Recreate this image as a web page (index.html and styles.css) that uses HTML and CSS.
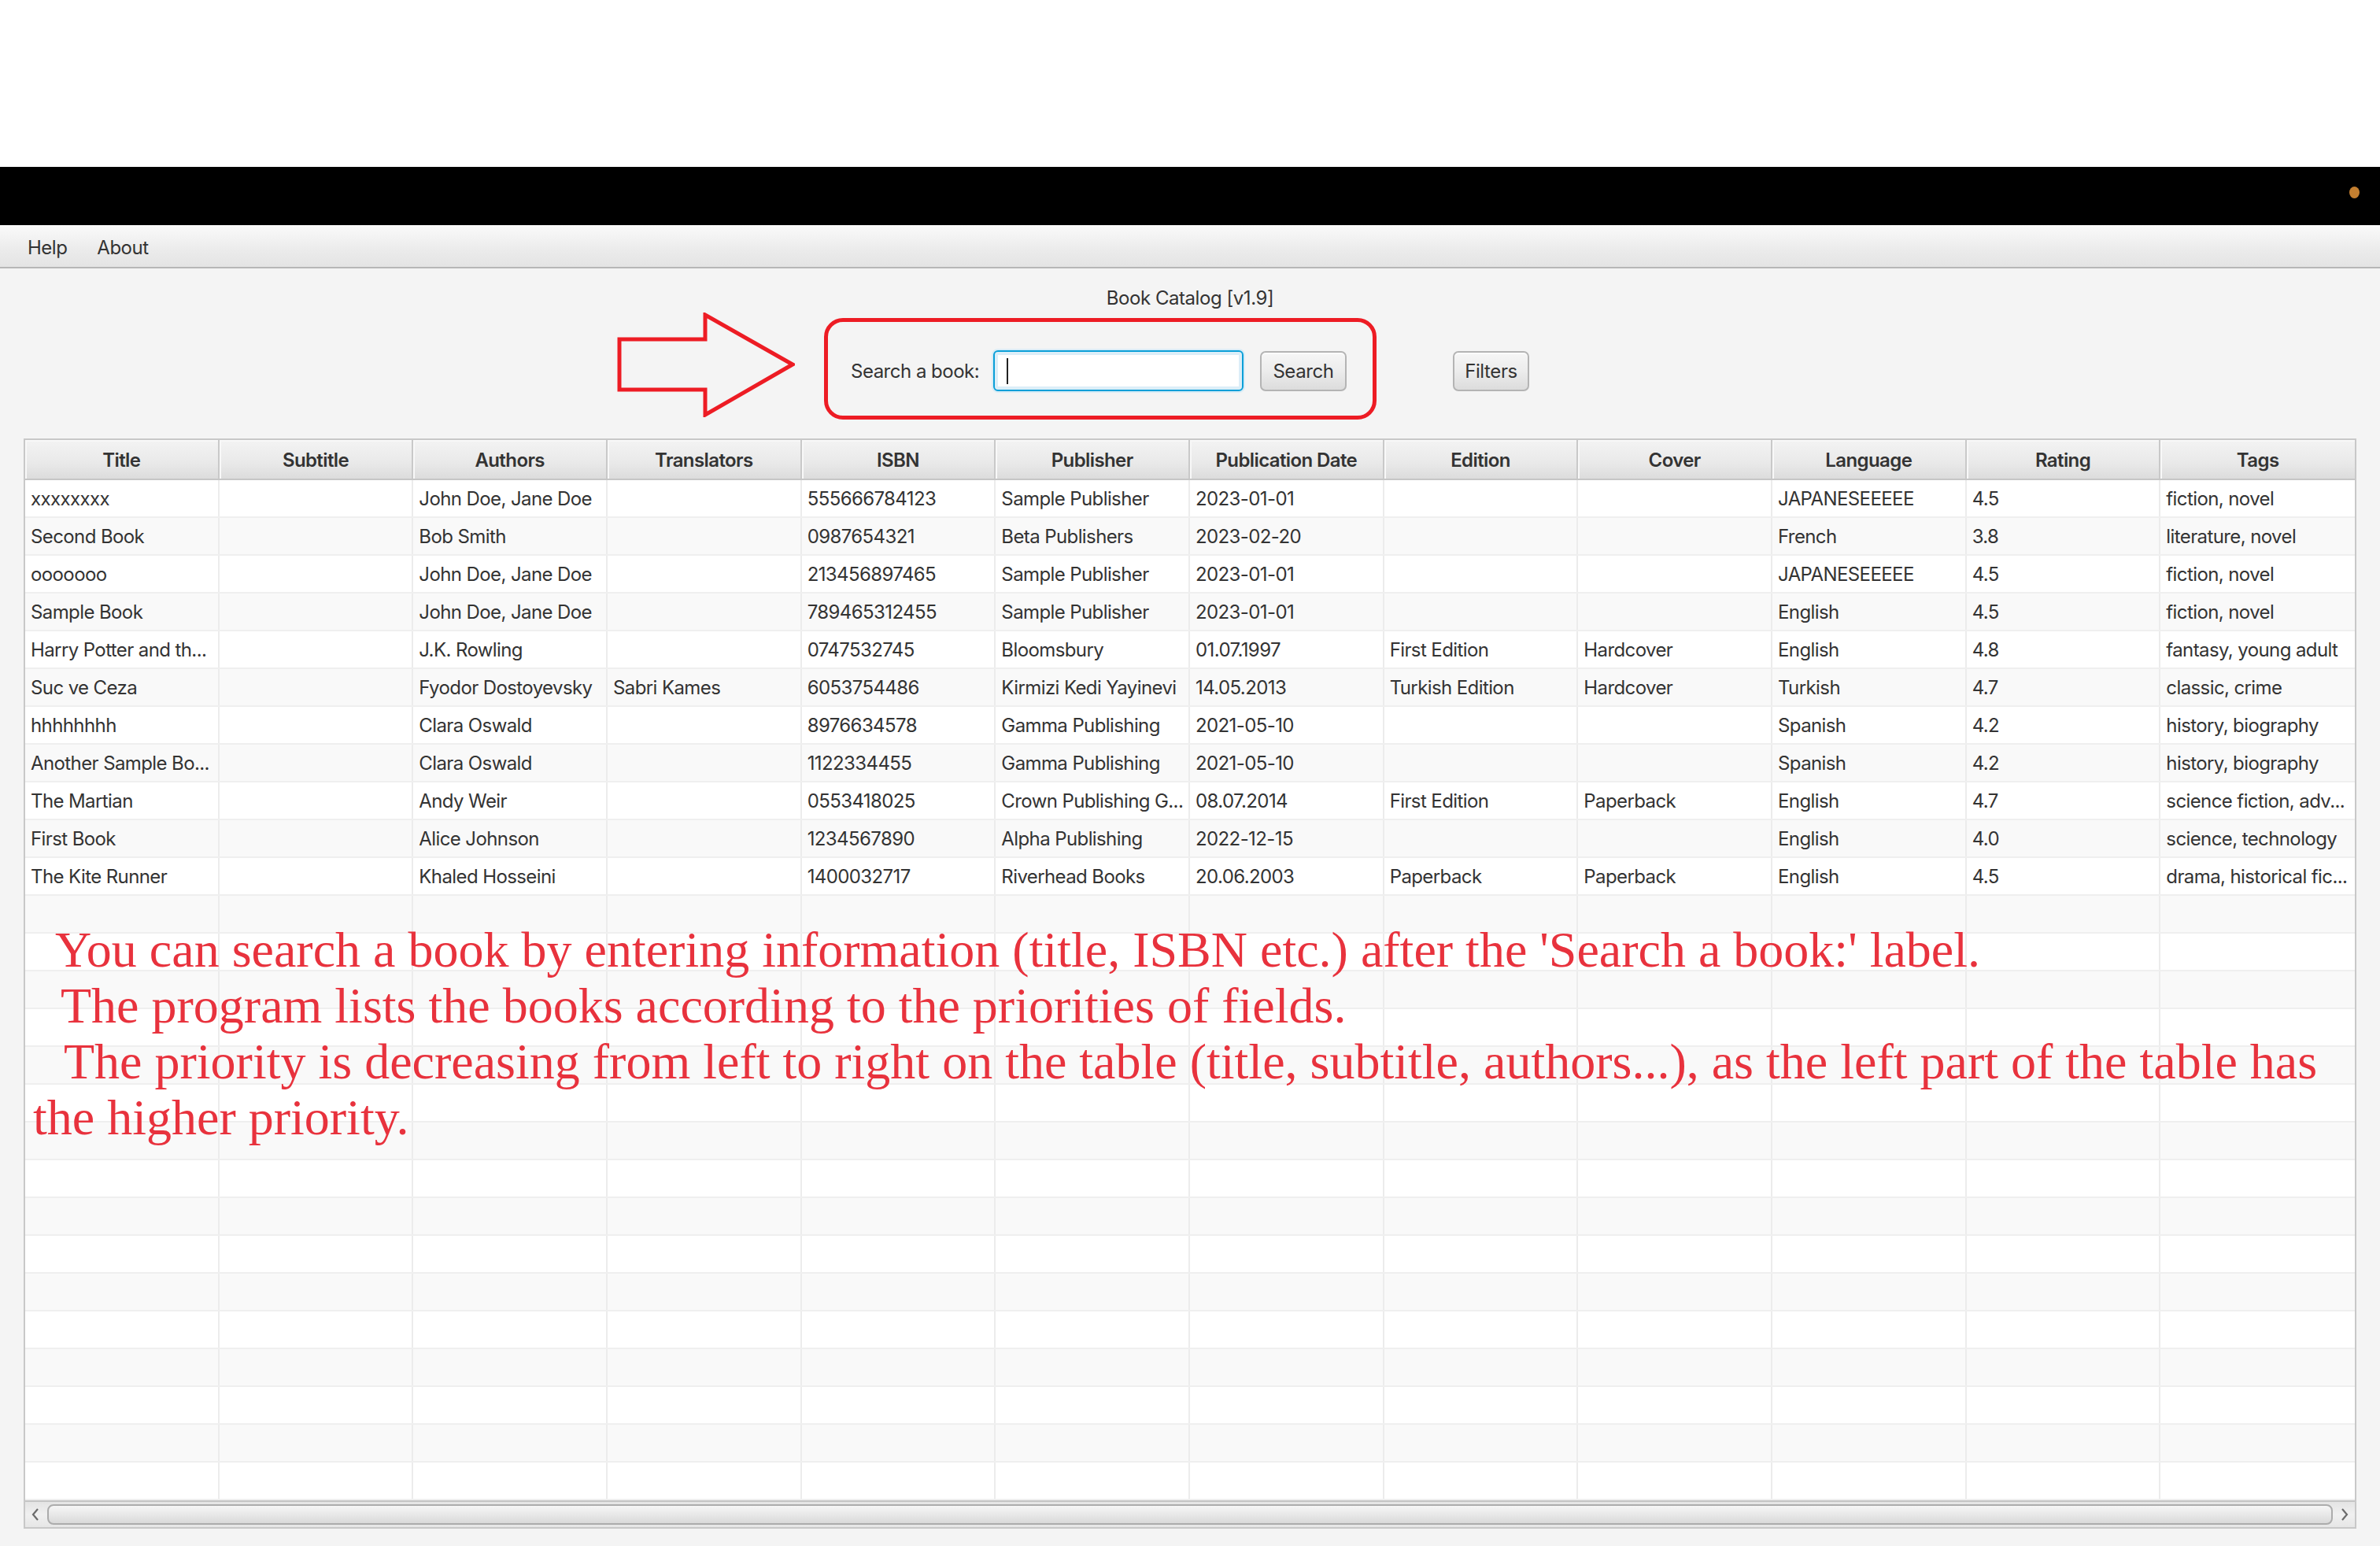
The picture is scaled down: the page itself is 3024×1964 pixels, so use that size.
FILE: index.html
```html
<!DOCTYPE html>
<html>
<head>
<meta charset="utf-8">
<link rel="stylesheet" href="styles.css">
</head>
<body>
<div class="screen">
  <div class="top-white"></div>
  <div class="titlebar"><span class="dot"></span></div>
  <div class="menubar">
    <span class="menu-item">Help</span>
    <span class="menu-item">About</span>
  </div>
  <div class="content">
    <div class="app-title">Book Catalog [v1.9]</div>
    <div class="toolbar">
      <svg class="arrow" width="226" height="133" viewBox="-3 -3 226 133">
        <polygon points="0,31 109,31 109,0 220,63 109,127 109,95 0,95" fill="none" stroke="#ed1c24" stroke-width="5" stroke-linejoin="miter"/>
      </svg>
      <div class="search-box">
        <span class="search-label">Search a book:</span>
        <div class="search-input"><span class="caret"></span></div>
        <button class="fx-button search-btn">Search</button>
      </div>
      <button class="fx-button filters-btn">Filters</button>
    </div>
    <div class="table">
      <div class="thead">
        <div class="th">Title</div><div class="th">Subtitle</div><div class="th">Authors</div><div class="th">Translators</div><div class="th">ISBN</div><div class="th">Publisher</div><div class="th">Publication Date</div><div class="th">Edition</div><div class="th">Cover</div><div class="th">Language</div><div class="th">Rating</div><div class="th">Tags</div>
      </div>
      <div class="tbody">
        <div class="tr"><div class="td">xxxxxxxx</div><div class="td"></div><div class="td">John Doe, Jane Doe</div><div class="td"></div><div class="td">555666784123</div><div class="td">Sample Publisher</div><div class="td">2023-01-01</div><div class="td"></div><div class="td"></div><div class="td">JAPANESEEEEE</div><div class="td">4.5</div><div class="td">fiction, novel</div></div>
        <div class="tr"><div class="td">Second Book</div><div class="td"></div><div class="td">Bob Smith</div><div class="td"></div><div class="td">0987654321</div><div class="td">Beta Publishers</div><div class="td">2023-02-20</div><div class="td"></div><div class="td"></div><div class="td">French</div><div class="td">3.8</div><div class="td">literature, novel</div></div>
        <div class="tr"><div class="td">ooooooo</div><div class="td"></div><div class="td">John Doe, Jane Doe</div><div class="td"></div><div class="td">213456897465</div><div class="td">Sample Publisher</div><div class="td">2023-01-01</div><div class="td"></div><div class="td"></div><div class="td">JAPANESEEEEE</div><div class="td">4.5</div><div class="td">fiction, novel</div></div>
        <div class="tr"><div class="td">Sample Book</div><div class="td"></div><div class="td">John Doe, Jane Doe</div><div class="td"></div><div class="td">789465312455</div><div class="td">Sample Publisher</div><div class="td">2023-01-01</div><div class="td"></div><div class="td"></div><div class="td">English</div><div class="td">4.5</div><div class="td">fiction, novel</div></div>
        <div class="tr"><div class="td">Harry Potter and th...</div><div class="td"></div><div class="td">J.K. Rowling</div><div class="td"></div><div class="td">0747532745</div><div class="td">Bloomsbury</div><div class="td">01.07.1997</div><div class="td">First Edition</div><div class="td">Hardcover</div><div class="td">English</div><div class="td">4.8</div><div class="td">fantasy, young adult</div></div>
        <div class="tr"><div class="td">Suc ve Ceza</div><div class="td"></div><div class="td">Fyodor Dostoyevsky</div><div class="td">Sabri Kames</div><div class="td">6053754486</div><div class="td">Kirmizi Kedi Yayinevi</div><div class="td">14.05.2013</div><div class="td">Turkish Edition</div><div class="td">Hardcover</div><div class="td">Turkish</div><div class="td">4.7</div><div class="td">classic, crime</div></div>
        <div class="tr"><div class="td">hhhhhhhh</div><div class="td"></div><div class="td">Clara Oswald</div><div class="td"></div><div class="td">8976634578</div><div class="td">Gamma Publishing</div><div class="td">2021-05-10</div><div class="td"></div><div class="td"></div><div class="td">Spanish</div><div class="td">4.2</div><div class="td">history, biography</div></div>
        <div class="tr"><div class="td">Another Sample Bo...</div><div class="td"></div><div class="td">Clara Oswald</div><div class="td"></div><div class="td">1122334455</div><div class="td">Gamma Publishing</div><div class="td">2021-05-10</div><div class="td"></div><div class="td"></div><div class="td">Spanish</div><div class="td">4.2</div><div class="td">history, biography</div></div>
        <div class="tr"><div class="td">The Martian</div><div class="td"></div><div class="td">Andy Weir</div><div class="td"></div><div class="td">0553418025</div><div class="td">Crown Publishing G...</div><div class="td">08.07.2014</div><div class="td">First Edition</div><div class="td">Paperback</div><div class="td">English</div><div class="td">4.7</div><div class="td">science fiction, adv...</div></div>
        <div class="tr"><div class="td">First Book</div><div class="td"></div><div class="td">Alice Johnson</div><div class="td"></div><div class="td">1234567890</div><div class="td">Alpha Publishing</div><div class="td">2022-12-15</div><div class="td"></div><div class="td"></div><div class="td">English</div><div class="td">4.0</div><div class="td">science, technology</div></div>
        <div class="tr"><div class="td">The Kite Runner</div><div class="td"></div><div class="td">Khaled Hosseini</div><div class="td"></div><div class="td">1400032717</div><div class="td">Riverhead Books</div><div class="td">20.06.2003</div><div class="td">Paperback</div><div class="td">Paperback</div><div class="td">English</div><div class="td">4.5</div><div class="td">drama, historical fic...</div></div>
        <div class="tr empty"><div class="td"></div><div class="td"></div><div class="td"></div><div class="td"></div><div class="td"></div><div class="td"></div><div class="td"></div><div class="td"></div><div class="td"></div><div class="td"></div><div class="td"></div><div class="td"></div></div>
        <div class="tr empty"><div class="td"></div><div class="td"></div><div class="td"></div><div class="td"></div><div class="td"></div><div class="td"></div><div class="td"></div><div class="td"></div><div class="td"></div><div class="td"></div><div class="td"></div><div class="td"></div></div>
        <div class="tr empty"><div class="td"></div><div class="td"></div><div class="td"></div><div class="td"></div><div class="td"></div><div class="td"></div><div class="td"></div><div class="td"></div><div class="td"></div><div class="td"></div><div class="td"></div><div class="td"></div></div>
        <div class="tr empty"><div class="td"></div><div class="td"></div><div class="td"></div><div class="td"></div><div class="td"></div><div class="td"></div><div class="td"></div><div class="td"></div><div class="td"></div><div class="td"></div><div class="td"></div><div class="td"></div></div>
        <div class="tr empty"><div class="td"></div><div class="td"></div><div class="td"></div><div class="td"></div><div class="td"></div><div class="td"></div><div class="td"></div><div class="td"></div><div class="td"></div><div class="td"></div><div class="td"></div><div class="td"></div></div>
        <div class="tr empty"><div class="td"></div><div class="td"></div><div class="td"></div><div class="td"></div><div class="td"></div><div class="td"></div><div class="td"></div><div class="td"></div><div class="td"></div><div class="td"></div><div class="td"></div><div class="td"></div></div>
        <div class="tr empty"><div class="td"></div><div class="td"></div><div class="td"></div><div class="td"></div><div class="td"></div><div class="td"></div><div class="td"></div><div class="td"></div><div class="td"></div><div class="td"></div><div class="td"></div><div class="td"></div></div>
        <div class="tr empty"><div class="td"></div><div class="td"></div><div class="td"></div><div class="td"></div><div class="td"></div><div class="td"></div><div class="td"></div><div class="td"></div><div class="td"></div><div class="td"></div><div class="td"></div><div class="td"></div></div>
        <div class="tr empty"><div class="td"></div><div class="td"></div><div class="td"></div><div class="td"></div><div class="td"></div><div class="td"></div><div class="td"></div><div class="td"></div><div class="td"></div><div class="td"></div><div class="td"></div><div class="td"></div></div>
        <div class="tr empty"><div class="td"></div><div class="td"></div><div class="td"></div><div class="td"></div><div class="td"></div><div class="td"></div><div class="td"></div><div class="td"></div><div class="td"></div><div class="td"></div><div class="td"></div><div class="td"></div></div>
        <div class="tr empty"><div class="td"></div><div class="td"></div><div class="td"></div><div class="td"></div><div class="td"></div><div class="td"></div><div class="td"></div><div class="td"></div><div class="td"></div><div class="td"></div><div class="td"></div><div class="td"></div></div>
        <div class="tr empty"><div class="td"></div><div class="td"></div><div class="td"></div><div class="td"></div><div class="td"></div><div class="td"></div><div class="td"></div><div class="td"></div><div class="td"></div><div class="td"></div><div class="td"></div><div class="td"></div></div>
        <div class="tr empty"><div class="td"></div><div class="td"></div><div class="td"></div><div class="td"></div><div class="td"></div><div class="td"></div><div class="td"></div><div class="td"></div><div class="td"></div><div class="td"></div><div class="td"></div><div class="td"></div></div>
        <div class="tr empty"><div class="td"></div><div class="td"></div><div class="td"></div><div class="td"></div><div class="td"></div><div class="td"></div><div class="td"></div><div class="td"></div><div class="td"></div><div class="td"></div><div class="td"></div><div class="td"></div></div>
        <div class="tr empty"><div class="td"></div><div class="td"></div><div class="td"></div><div class="td"></div><div class="td"></div><div class="td"></div><div class="td"></div><div class="td"></div><div class="td"></div><div class="td"></div><div class="td"></div><div class="td"></div></div>
        <div class="tr empty"><div class="td"></div><div class="td"></div><div class="td"></div><div class="td"></div><div class="td"></div><div class="td"></div><div class="td"></div><div class="td"></div><div class="td"></div><div class="td"></div><div class="td"></div><div class="td"></div></div>
      </div>
      <div class="hscroll">
        <svg class="sb-arrow" width="22" height="24" viewBox="0 0 22 24"><polyline points="14,5 8,12 14,19" fill="none" stroke="#6b6b6b" stroke-width="2.2"/></svg>
        <div class="sb-thumb"></div>
        <svg class="sb-arrow" width="22" height="24" viewBox="0 0 22 24"><polyline points="8,5 14,12 8,19" fill="none" stroke="#6b6b6b" stroke-width="2.2"/></svg>
      </div>
      <div class="annotation">
        <div class="note-line l1">You can search a book by entering information (title, ISBN etc.) after the 'Search a book:' label.</div>
        <div class="note-line l2">The program lists the books according to the priorities of fields.</div>
        <div class="note-line l3">The priority is decreasing from left to right on the table (title, subtitle, authors...), as the left part of the table has</div>
        <div class="note-line l4">the higher priority.</div>
      </div>
    </div>
  </div>
</div>
</body>
</html>
```

FILE: styles.css
```css
* { box-sizing: border-box; }
html, body { margin: 0; padding: 0; }
body {
  width: 3024px;
  height: 1964px;
  overflow: hidden;
  background: #ffffff;
  font-family: "Inter", "Roboto", sans-serif;
  color: #333333;
}
.screen { width: 3024px; height: 1964px; display: flex; flex-direction: column; }
.top-white { height: 212px; background: #ffffff; flex: none; }
.titlebar {
  height: 74px; flex: none; background: #000000;
  display: flex; justify-content: flex-end; align-items: flex-start;
  padding: 25px 26px 0 0;
}
.dot { width: 13px; height: 15px; border-radius: 50%; background: #c47f30; }
.menubar {
  height: 55px; flex: none;
  background: linear-gradient(to bottom, #fafafa 0%, #ececec 55%, #e4e4e4 100%);
  border-bottom: 2px solid #b7b7b7;
  display: flex; align-items: center;
  padding: 4px 0 0 35px; gap: 38px;
  font-size: 24px; letter-spacing: -0.5px; color: #333333;
}
.content {
  flex: 1; background: #f4f4f4;
  display: flex; flex-direction: column;
  position: relative;
}
.app-title {
  margin-top: 22px;
  height: 32px; line-height: 32px;
  text-align: center; font-size: 24px; letter-spacing: -0.45px; color: #333333;
}
.toolbar {
  margin-top: 2px;
  height: 136px;
  display: flex; align-items: flex-start;
  padding-left: 784px;
}
.arrow { flex: none; display: block; }
.search-box {
  margin-left: 37px; margin-top: 7px;
  width: 702px; height: 129px;
  border: 5px solid #ed1c24; border-radius: 24px;
  display: flex; align-items: center;
  padding: 5px 0 0 29px;
}
.search-label { font-size: 24px; letter-spacing: -0.5px; color: #333333; white-space: nowrap; width: 162px; }
.search-input {
  margin-left: 19px;
  width: 318px; height: 52px;
  border: 2px solid #0a9fd8; border-radius: 6px;
  background: #ffffff;
  box-shadow: inset 0 0 0 4px #dceef8, 0 0 0 2px #d9ecf6;
  display: flex; align-items: center; padding-left: 15px;
}
.caret { width: 2px; height: 33px; background: #222222; }
.fx-button {
  font-family: "Inter", "Roboto", sans-serif;
  font-size: 24px; letter-spacing: -0.4px; color: #333333;
  height: 51px;
  border: 2px solid #b4b4b4; border-radius: 7px;
  background: linear-gradient(to bottom, #f6f6f6 0%, #ececec 50%, #dcdcdc 100%);
  box-shadow: inset 0 2px 0 #fbfbfb;
  padding: 0; margin: 0;
}
.search-btn { margin-left: 21px; width: 110px; }
.filters-btn { margin-left: 97px; margin-top: 49px; width: 97px; }

.table {
  margin: 24px 30px 0 30px;
  width: 2964px; height: 1385px;
  border: 2px solid #c8c8c8;
  background: #ffffff;
  display: flex; flex-direction: column;
  position: relative;
  overflow: hidden;
}
.thead {
  height: 51px; flex: none;
  display: grid; grid-template-columns: repeat(12, 1fr);
  border-bottom: 2px solid #c6c6c6;
}
.th {
  background: linear-gradient(to bottom, #f3f3f3 0%, #e9e9e9 60%, #dcdcdc 100%);
  border-right: 2px solid #c9c9c9;
  box-shadow: inset 2px 2px 0 #f8f8f8;
  font-size: 24px; font-weight: 600; color: #333333;
  display: flex; align-items: center; justify-content: center;
  white-space: nowrap; overflow: hidden;
  letter-spacing: -0.6px;
  padding-top: 2px;
}
.th:last-child { border-right: none; }
.tbody { height: 1296px; flex: none; overflow: hidden; }
.tr {
  height: 48px;
  display: grid; grid-template-columns: repeat(12, 1fr);
  border-bottom: 2px solid #efefef;
  background: #ffffff;
}
.tr:nth-child(even) { background: #f9f9f9; }
.td {
  border-right: 2px solid #ececec;
  padding: 0 6px 0 7px;
  display: flex; align-items: center;
  font-size: 24px; color: #333333;
  white-space: nowrap; overflow: hidden;
  letter-spacing: -0.6px;
}
.td:last-child { border-right: none; }
.hscroll {
  flex: 1;
  border-top: 2px solid #c4c4c4;
  background: linear-gradient(to bottom, #e4e4e4 0%, #f0f0f0 50%, #e6e6e6 100%);
  display: flex; align-items: center;
  padding: 0 2px 0 2px;
}
.sb-arrow { flex: none; display: block; }
.sb-thumb {
  flex: 1; height: 26px; margin: 0 4px;
  border: 2px solid #acacac; border-radius: 8px;
  background: linear-gradient(to bottom, #f6f6f6 0%, #e8e8e8 50%, #d9d9d9 100%);
}
.annotation {
  position: absolute;
  left: 0; top: 612px;
  font-family: "Liberation Serif", "Times New Roman", serif;
  font-size: 64px; line-height: 71px;
  color: #e8323d;
  white-space: nowrap;
}
.note-line.l1 { padding-left: 38px; }
.note-line.l2 { padding-left: 45px; }
.note-line.l3 { padding-left: 49px; }
.note-line.l4 { padding-left: 10px; }
```
